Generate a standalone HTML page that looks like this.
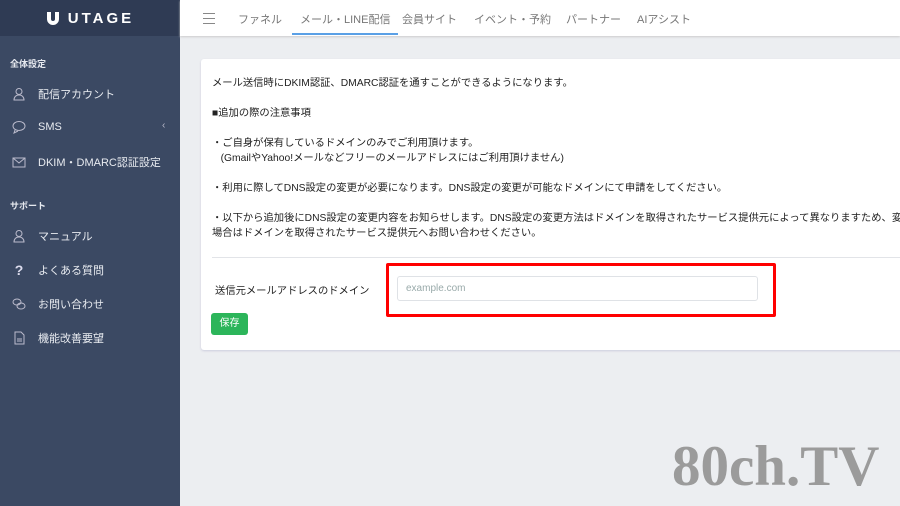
<!DOCTYPE html>
<html><head><meta charset="utf-8"><style>
*{margin:0;padding:0;box-sizing:border-box}
body{width:900px;height:506px;overflow:hidden;background:#eceef1;font-family:"Liberation Sans","Noto Sans CJK JP",sans-serif;position:relative}
.sb{position:absolute;left:0;top:0;width:180px;height:506px;background:#3b4963}
.logo{height:36px;background:#2f3b54;color:#fff;display:flex;align-items:center;justify-content:center;font-weight:bold;letter-spacing:3px;font-size:15px}
.sec{color:#e6e9ef;font-size:9px;font-weight:bold;position:absolute;left:10px}
.it{position:absolute;left:12px;color:#e8ebf0;font-size:11px;display:flex;align-items:center}
.it svg{width:14px;height:14px;margin-right:12px}
.hd{position:absolute;left:180px;top:0;width:720px;height:36px;background:#fff;box-shadow:0 1px 2px #ccc}
.nav{position:absolute;top:11px;font-size:11px;color:#777}
.card{position:absolute;left:201px;top:59px;width:710px;height:291px;background:#fff;border-radius:3px;box-shadow:0 1px 2px #ccd}
.t{position:absolute;left:11px;font-size:10.3px;color:#222;white-space:nowrap}
.wm{position:absolute;left:672px;top:434px;font-family:"Liberation Serif",serif;font-weight:bold;font-size:57px;color:#9b9b9b;letter-spacing:0px}
</style></head><body>
<div class="sb">
<div class="logo"><svg width="14" height="16" viewBox="0 0 14 16" style="margin-right:8px"><path d="M1 2h4v7a2 2 0 004 0V2h4v7a6 6 0 01-12 0z" fill="#fff"/></svg>UTAGE</div>
<div class="sec" style="top:57px">全体設定</div>
<div class="it" style="top:86px"><svg viewBox="0 0 14 14" fill="none" stroke="#bbc" stroke-width="1"><circle cx="7" cy="4.5" r="3"/><path d="M2 13c0-3 2-5 5-5s5 2 5 5z"/></svg>配信アカウント</div>
<div class="it" style="top:120px"><svg viewBox="0 0 14 14" fill="none" stroke="#bbc"><ellipse cx="7" cy="6" rx="6" ry="4.5"/><path d="M3 10l-1 3 4-2"/></svg>SMS</div>
<div style="position:absolute;left:162px;top:120px;color:#bbc;font-size:10px">‹</div>
<div class="it" style="top:154px"><svg viewBox="0 0 14 14" fill="none" stroke="#bbc"><rect x="1" y="3" width="12" height="9"/><path d="M1 3l6 5 6-5"/></svg>DKIM・DMARC認証設定</div>
<div class="sec" style="top:199px">サポート</div>
<div class="it" style="top:228px"><svg viewBox="0 0 14 14" fill="none" stroke="#bbc"><circle cx="7" cy="4.5" r="3"/><path d="M2 13c0-3 2-5 5-5s5 2 5 5z"/></svg>マニュアル</div>
<div class="it" style="top:262px"><span style="width:14px;margin-right:12px;font-weight:bold;color:#dde;font-size:14px;text-align:center">?</span>よくある質問</div>
<div class="it" style="top:296px"><svg viewBox="0 0 14 14" fill="none" stroke="#bbc"><ellipse cx="5" cy="5" rx="4" ry="3"/><ellipse cx="9" cy="9" rx="4" ry="3"/></svg>お問い合わせ</div>
<div class="it" style="top:330px"><svg viewBox="0 0 14 14" fill="none" stroke="#bbc"><path d="M3 1h6l3 3v9H3z"/><path d="M5 8h5M5 10h5"/></svg>機能改善要望</div>
</div>
<div class="hd">
<div style="position:absolute;left:23px;top:13px;width:12px"><div style="height:1px;background:#888;margin-bottom:4px"></div><div style="height:1px;background:#888;margin-bottom:4px"></div><div style="height:1px;background:#888"></div></div>
<div class="nav" style="left:58px">ファネル</div>
<div class="nav" style="left:112px;padding:0 8px 6px;border-bottom:2px solid #5aa0e6">メール・LINE配信</div>
<div class="nav" style="left:222px">会員サイト</div>
<div class="nav" style="left:294px">イベント・予約</div>
<div class="nav" style="left:386px">パートナー</div>
<div class="nav" style="left:457px">AIアシスト</div>
</div>
<div class="card">
<div class="t" style="top:15px">メール送信時にDKIM認証、DMARC認証を通すことができるようになります。</div>
<div class="t" style="top:45px">■追加の際の注意事項</div>
<div class="t" style="top:75px">・ご自身が保有しているドメインのみでご利用頂けます。</div>
<div class="t" style="top:90px">&nbsp;&nbsp;&nbsp;(GmailやYahoo!メールなどフリーのメールアドレスにはご利用頂けません)</div>
<div class="t" style="top:120px">・利用に際してDNS設定の変更が必要になります。DNS設定の変更が可能なドメインにて申請をしてください。</div>
<div class="t" style="top:150px">・以下から追加後にDNS設定の変更内容をお知らせします。DNS設定の変更方法はドメインを取得されたサービス提供元によって異なりますため、変更方法</div>
<div class="t" style="top:165px">場合はドメインを取得されたサービス提供元へお問い合わせください。</div>
<div style="position:absolute;left:11px;top:198px;width:700px;height:1px;background:#e2e4e8"></div>
<div class="t" style="top:223px;left:14px">送信元メールアドレスのドメイン</div>
<div style="position:absolute;left:196px;top:217px;width:361px;height:25px;border:1px solid #dfe2e6;border-radius:3px;font-size:10px;color:#9aa;padding:6px 8px">example.com</div>
<div style="position:absolute;left:10px;top:254px;width:37px;height:22px;background:#2cb55a;border-radius:3px;color:#fff;font-size:10px;text-align:center;line-height:22px">保存</div>
</div>
<div style="position:absolute;left:386px;top:263px;width:390px;height:54px;border:3px solid #f00;border-radius:2px"></div>
<div class="wm">80ch.TV</div>
</body></html>
